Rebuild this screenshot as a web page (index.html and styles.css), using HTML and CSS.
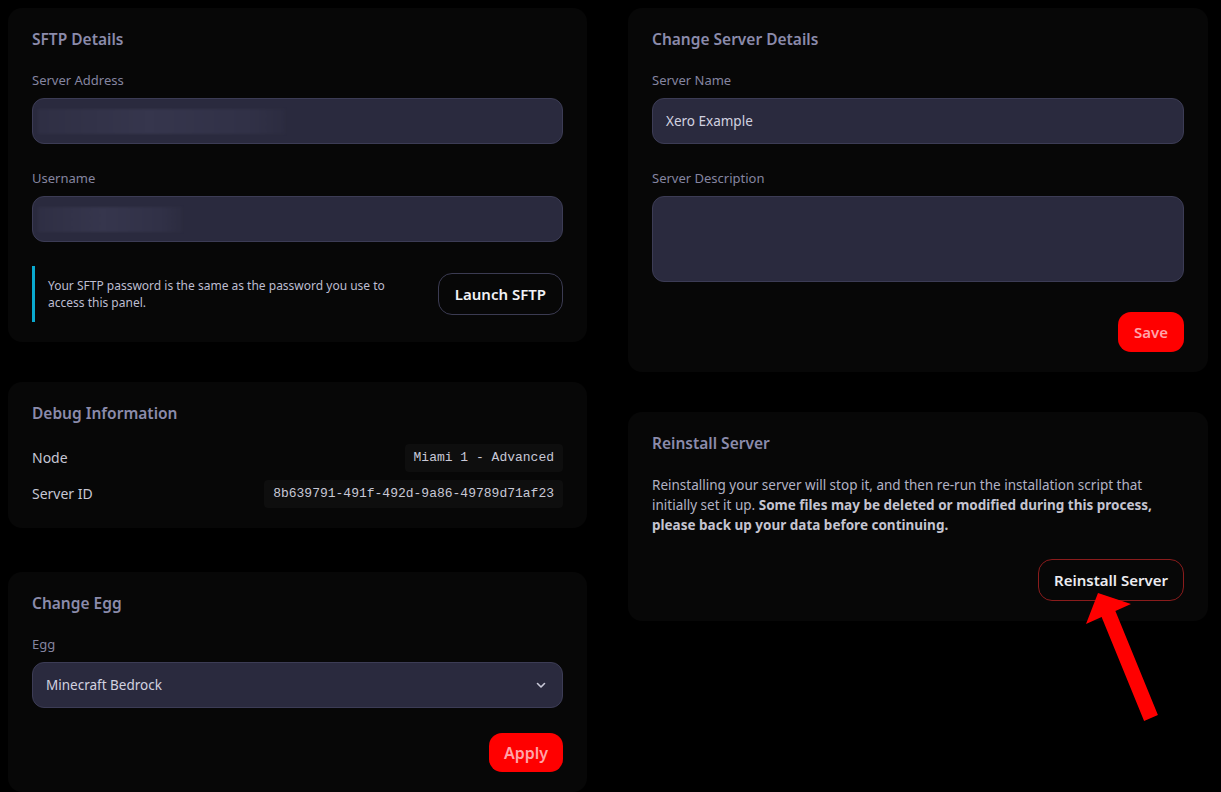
FILE: index.html
```html
<!DOCTYPE html>
<html lang="en">
<head>
    <meta charset="UTF-8">
    <title>Server Settings</title>
    <link rel="stylesheet" href="styles.css">
</head>
<body>

<div class="page">

    <!-- venstre kolonne -->
    <div class="column">

        <div class="card">
            <h3 class="card-title">SFTP Details</h3>
            <div class="field">
                <label class="field-label">Server Address</label>
                <div class="input"><span class="blur blur-long"></span></div>
            </div>
            <div class="field">
                <label class="field-label">Username</label>
                <div class="input"><span class="blur blur-short"></span></div>
            </div>
            <div class="sftp-row">
                <div class="notice">Your SFTP password is the same as the password you use to<br>access this panel.</div>
                <button class="btn btn-outline">Launch SFTP</button>
            </div>
        </div>

        <div class="card">
            <h3 class="card-title title-tight">Debug Information</h3>
            <div class="debug-row">
                <span class="debug-label">Node</span>
                <code class="debug-value">Miami 1 - Advanced</code>
            </div>
            <div class="debug-row">
                <span class="debug-label">Server ID</span>
                <code class="debug-value">8b639791-491f-492d-9a86-49789d71af23</code>
            </div>
        </div>

        <div class="card card-egg">
            <h3 class="card-title">Change Egg</h3>
            <label class="field-label">Egg</label>
            <div class="input select">
                <span>Minecraft Bedrock</span>
                <svg class="chevron" width="10" height="7" viewBox="0 0 10 7">
                    <path d="M1.5 1.5 L5 5 L8.5 1.5" fill="none" stroke="#c9c9d8" stroke-width="1.6" stroke-linecap="round" stroke-linejoin="round"/>
                </svg>
            </div>
            <div class="actions actions-egg">
                <button class="btn btn-red btn-apply">Apply</button>
            </div>
        </div>

    </div>

    <!-- højre kolonne -->
    <div class="column">

        <div class="card">
            <h3 class="card-title">Change Server Details</h3>
            <div class="field">
                <label class="field-label">Server Name</label>
                <div class="input">Xero Example</div>
            </div>
            <label class="field-label">Server Description</label>
            <div class="input textarea"></div>
            <div class="actions actions-save">
                <button class="btn btn-red btn-save">Save</button>
            </div>
        </div>

        <div class="card">
            <h3 class="card-title">Reinstall Server</h3>
            <p class="reinstall-text">Reinstalling your server will stop it, and then re-run the installation script that<br>initially set it up. <strong>Some files may be deleted or modified during this process,<br>please back up your data before continuing.</strong></p>
            <div class="actions actions-reinstall">
                <button class="btn btn-danger">Reinstall Server</button>
            </div>
        </div>

    </div>

    <!-- rød pil som peger paa knappen -->
    <svg class="arrow" width="1221" height="792" viewBox="0 0 1221 792">
        <polygon points="1098,593 1131,604 1115.4,611.1 1157.9,715.1 1144.1,720.9 1101.6,616.9 1086,624" fill="#ff0000"/>
    </svg>

</div>

</body>
</html>
```

FILE: styles.css
```css
body {
    margin: 0;
    background: #000;
    font-family: "Noto Sans", "Open Sans", sans-serif;
}

.page {
    position: relative;
    display: grid;
    grid-template-columns: 579px 580px;
    column-gap: 41px;
    align-items: start;
    padding: 8px 0 0 8px;
    height: 792px;
    box-sizing: border-box;
    overflow: hidden;
}

.column {
    display: flex;
    flex-direction: column;
    gap: 40px;
}

.card {
    background: #070707;
    border-radius: 14px;
    padding: 20px 24px 20px 24px;
}

.card-egg {
    margin-top: 4px;
}

.card-title {
    margin: 0 0 21px 0;
    font-size: 15.5px;
    line-height: 22px;
    font-weight: 600;
    color: #8b8bab;
}

.title-tight {
    margin-bottom: 20px;
}

.field {
    margin-bottom: 25px;
}

.field-label {
    display: block;
    font-size: 13px;
    line-height: 18px;
    color: #8585a0;
    margin-bottom: 9px;
}

.input {
    display: flex;
    align-items: center;
    height: 46px;
    box-sizing: border-box;
    padding: 0 13px;
    background: #2a2a3e;
    border: 1px solid #3c3c55;
    border-radius: 12px;
    font-size: 13.5px;
    color: #d2d2e0;
}

.textarea {
    height: 86px;
}

.select {
    justify-content: space-between;
    padding-right: 16px;
}

.chevron {
    display: block;
}

.blur {
    display: block;
    height: 25px;
    margin-left: -8px;
    background: linear-gradient(90deg, #2f2f44 0%, #36364d 45%, #313147 85%, #2c2c40 100%);
    filter: blur(1px);
}

.blur-long {
    width: 247px;
}

.blur-short {
    width: 144px;
}

.sftp-row {
    display: flex;
    align-items: center;
    justify-content: space-between;
    margin-top: -1px;
}

.notice {
    border-left: 3px solid #0aa9cf;
    padding: 11px 0 11px 13px;
    font-size: 12px;
    line-height: 17px;
    color: #bdbdd0;
}

.btn {
    font-family: inherit;
    font-weight: 600;
    font-size: 15px;
    cursor: pointer;
    border-radius: 14px;
}

.btn-outline {
    height: 42px;
    padding: 0 16px;
    background: transparent;
    border: 1px solid #3b3b52;
    color: #f2f2f6;
}

.btn-red {
    height: 40px;
    padding: 0 14px;
    background: #ff0000;
    border: none;
    color: #ffa3a8;
    border-radius: 13px;
}

.btn-save {
    padding: 0 16px;
}

.btn-apply {
    height: 39px;
    font-size: 16px;
    padding: 0 15px;
}

.btn-danger {
    height: 42px;
    padding: 0 15px;
    background: #070707;
    border: 1px solid #8a1c1c;
    color: #ececf0;
}

.actions {
    display: flex;
    justify-content: flex-end;
}

.actions-egg {
    margin-top: 25px;
}

.actions-save {
    margin-top: 30px;
}

.actions-reinstall {
    margin-top: 24px;
}

.debug-row {
    display: flex;
    align-items: center;
    justify-content: space-between;
    margin-bottom: 8px;
}

.debug-row:last-child {
    margin-bottom: 0;
}

.debug-label {
    font-size: 14px;
    line-height: 20px;
    color: #c6c6d4;
}

.debug-value {
    display: block;
    height: 28px;
    line-height: 28px;
    padding: 0 9px;
    background: #0e0e0e;
    border-radius: 4px;
    font-family: "Liberation Mono", "DejaVu Sans Mono", monospace;
    font-size: 13px;
    color: #c8c8d6;
}

.reinstall-text {
    margin: 0;
    font-size: 13.5px;
    line-height: 20px;
    color: #b2b2c4;
}

.reinstall-text strong {
    color: #c4c4d0;
}

.arrow {
    position: absolute;
    top: 0;
    left: 0;
    pointer-events: none;
}
```
